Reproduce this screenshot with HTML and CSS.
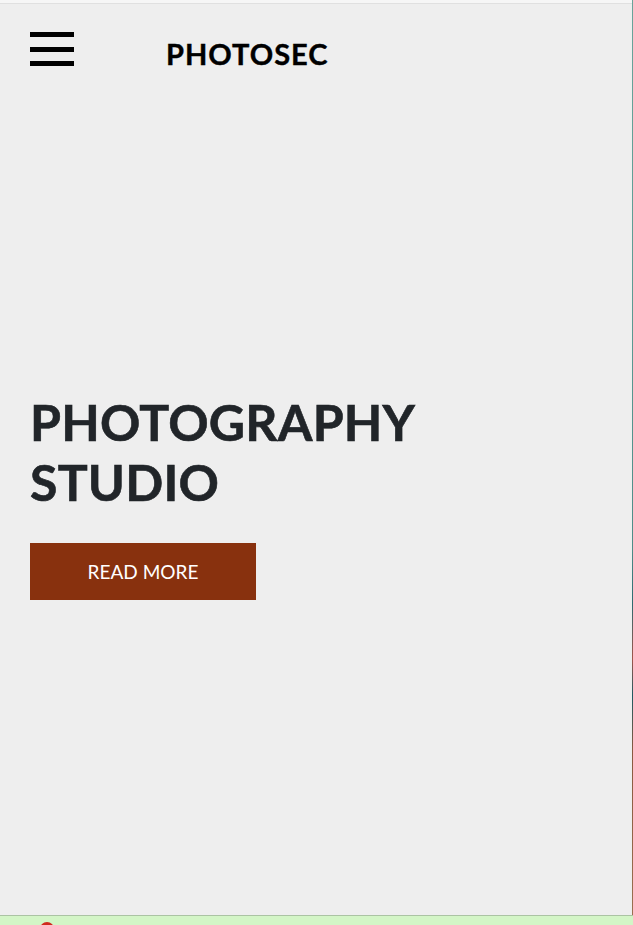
FILE: index.html
```html
<!DOCTYPE html>
<html lang="en">
<head>
<meta charset="utf-8">
<title>Photosec</title>
<link rel="stylesheet" href="styles.css">
</head>
<body>
<div class="screen">
  <div class="row">
    <main class="page">
      <div class="topline"></div>
      <header class="nav">
        <button class="burger" aria-label="Menu"><span></span><span></span><span></span></button>
        <a class="brand" href="#">PHOTOSEC</a>
      </header>
      <section class="hero">
        <h1 class="title">PHOTOGRAPHY<br>STUDIO</h1>
        <a class="btn" href="#">READ MORE</a>
      </section>
    </main>
    <div class="edge"></div>
  </div>
  <div class="footer-strip"><span class="dot"></span></div>
</div>
</body>
</html>
```
FILE: styles.css
```css
html, body {
  margin: 0;
  padding: 0;
}
body {
  width: 633px;
  height: 925px;
  overflow: hidden;
  background: #eeeeee;
  font-family: "Lato", "Liberation Sans", sans-serif;
}
.screen {
  display: flex;
  flex-direction: column;
  height: 925px;
}
.row {
  display: flex;
  height: 915px;
}
.page {
  width: 632px;
  background: #eeeeee;
  display: flex;
  flex-direction: column;
}
.edge {
  width: 1px;
  background: linear-gradient(to bottom, #6aa39a 0%, #5f9c94 30%, #4f8c88 60%, #2f6a70 66%, #a0564a 72%, #1f5a62 76%, #8a5a40 82%, #9a7050 100%);
}
.topline {
  height: 3px;
  background: #f6f6f6;
  border-bottom: 1px solid #e0e0e0;
}
.nav {
  display: flex;
  align-items: flex-start;
  padding: 28px 0 0 30px;
}
.burger {
  width: 44px;
  height: 34px;
  padding: 0;
  border: 0;
  background: transparent;
  display: flex;
  flex-direction: column;
  justify-content: space-between;
}
.burger span {
  display: block;
  height: 5px;
  background: #000;
}
.brand {
  margin-left: 92px;
  margin-top: 4px;
  font-size: 29px;
  line-height: 35px;
  font-weight: 700;
  color: #000;
  text-decoration: none;
  letter-spacing: 1px;
  -webkit-text-stroke: 0.4px #000;
}
.hero {
  padding: 0 30px;
  margin-top: 321px;
}
.title {
  margin: 0;
  font-size: 50px;
  line-height: 60px;
  font-weight: 700;
  color: #212529;
  letter-spacing: 0.2px;
  -webkit-text-stroke: 0.6px #212529;
}
.btn {
  display: flex;
  align-items: center;
  justify-content: center;
  width: 226px;
  height: 57px;
  margin-top: 31px;
  background: #88310e;
  color: #ffffff;
  font-size: 19px;
  text-decoration: none;
}
.footer-strip {
  position: relative;
  height: 9px;
  background: #d3f5c6;
  border-top: 1px solid #abc3a3;
  overflow: hidden;
}
.dot {
  position: absolute;
  left: 40px;
  top: 6px;
  width: 14px;
  height: 14px;
  border-radius: 50%;
  background: #d02a1e;
}
```
